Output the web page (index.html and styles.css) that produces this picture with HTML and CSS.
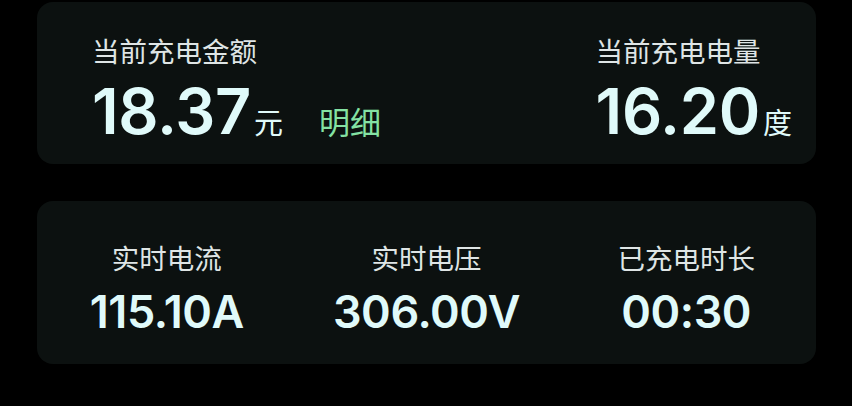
FILE: index.html
```html
<!DOCTYPE html>
<html lang="zh">
<head>
<meta charset="utf-8">
<link rel="stylesheet" href="styles.css">
</head>
<body>
<div class="page">
  <section class="card card-top">
    <div class="stat">
      <div class="label">当前充电金额</div>
      <div class="value-row">
        <span class="big">18.37</span><span class="unit">元</span>
        <span class="detail">明细</span>
      </div>
    </div>
    <div class="stat">
      <div class="label">当前充电电量</div>
      <div class="value-row">
        <span class="big">16.20</span><span class="unit">度</span>
      </div>
    </div>
  </section>
  <section class="card card-bottom">
    <div class="cell">
      <div class="label">实时电流</div>
      <div class="mid">115.10A</div>
    </div>
    <div class="cell">
      <div class="label">实时电压</div>
      <div class="mid">306.00V</div>
    </div>
    <div class="cell">
      <div class="label">已充电时长</div>
      <div class="mid">00:30</div>
    </div>
  </section>
</div>
</body>
</html>
```
FILE: styles.css
```css
html, body {
  margin: 0;
  padding: 0;
  background: #000;
}
body {
  width: 852px;
  height: 406px;
  overflow: hidden;
  font-family: Inter, "Noto Sans CJK SC", sans-serif;
}
.page {
  padding: 2px 36px 0 37px;
  display: flex;
  flex-direction: column;
  gap: 37px;
}
.card {
  background: #0c1110;
  border-radius: 16px;
  height: 162px;
  box-sizing: border-box;
}
.card-top {
  display: flex;
  justify-content: space-between;
  padding: 30px 24px 0 55px;
}
.label {
  font-family: "Noto Sans CJK SC", sans-serif;
  font-size: 27.5px;
  line-height: 36px;
  color: #dfe5e5;
}
.value-row {
  display: flex;
  align-items: baseline;
  margin-top: 10px;
}
.big {
  font-size: 63px;
  font-weight: 600;
  letter-spacing: -0.3px;
  line-height: 66px;
  color: #e0fafa;
}
.unit {
  font-family: "Noto Sans CJK SC", sans-serif;
  font-size: 29px;
  color: #e0fafa;
  margin-left: 3px;
}
.detail {
  font-family: "Noto Sans CJK SC", sans-serif;
  font-size: 31px;
  color: #84e2a3;
  margin-left: 36px;
}
.card-bottom {
  height: 163px;
  display: grid;
  grid-template-columns: 1fr 1fr 1fr;
  padding-top: 38px;
}
.cell {
  display: flex;
  flex-direction: column;
  align-items: center;
}
.mid {
  font-size: 45px;
  font-weight: 600;
  letter-spacing: -0.4px;
  line-height: 50px;
  margin-top: 12px;
  color: #e0fafa;
}
```
